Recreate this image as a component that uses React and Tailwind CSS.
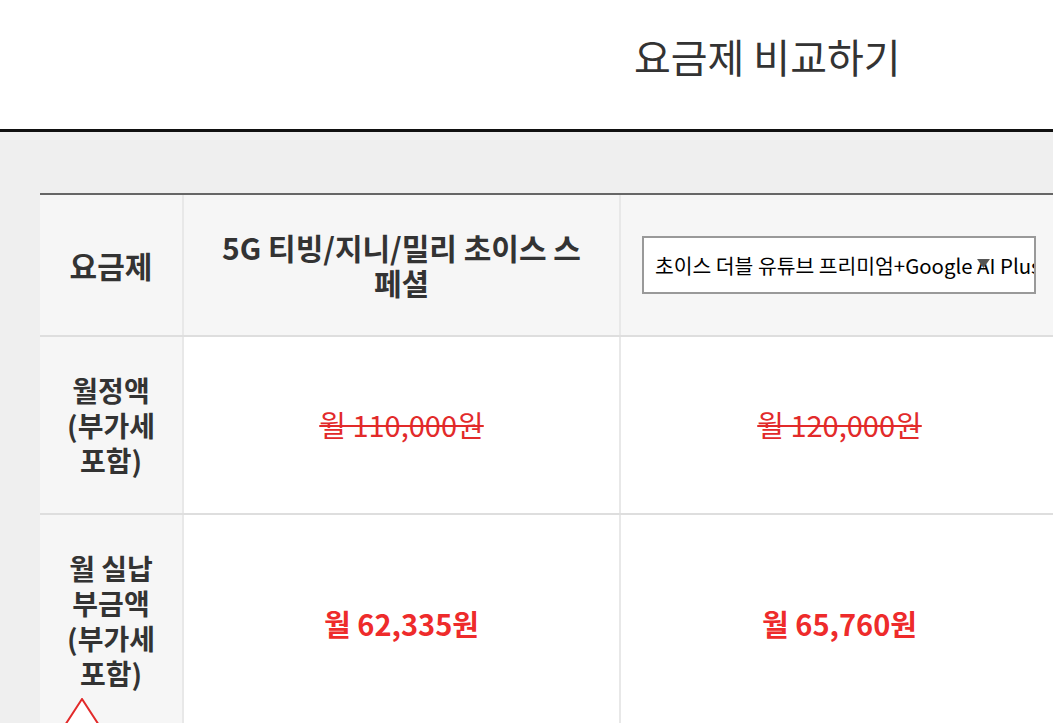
import React from 'react';

const font = { fontFamily: '"Noto Sans CJK KR", "Noto Sans", sans-serif' };

const App = () => {
  return (
    <div className="w-[1053px] h-[723px] overflow-hidden bg-[#efefef] text-[#333]" style={font}>
      {/* Header */}
      <header className="h-[132px] bg-white border-b-[3px] border-[#111] flex items-center pl-[634px] pb-[18px]">
        <h1 className="text-[40px] font-normal leading-none whitespace-nowrap">요금제 비교하기</h1>
      </header>

      {/* Compare table */}
      <div className="pt-[61px] pl-[40px]">
        <div className="w-[1018px] border-t-2 border-[#666]">
          {/* Header row */}
          <div className="grid grid-cols-[144px_437px_437px] h-[142px] border-b-2 border-[#dedede] bg-[#f6f6f6]">
            <div className="flex items-center justify-center border-r-2 border-[#e8e8e8] text-[30px] font-bold">요금제</div>
            <div className="flex items-center justify-center border-r-2 border-[#e8e8e8] px-[38px] text-center text-[30px] font-bold leading-[35px]">
              5G 티빙/지니/밀리 초이스 스페셜
            </div>
            <div className="flex items-center pl-[21px]">
              <div className="relative w-[394px] h-[58px] border-2 border-[#999] bg-white overflow-hidden flex items-center pl-[11px]">
                <span className="text-[20.4px] text-black whitespace-nowrap">초이스 더블 유튜브 프리미엄+Google AI Plus</span>
                <svg className="absolute right-[44px] top-[21px]" width="13" height="10" viewBox="0 0 13 10">
                  <polygon points="0,0 13,0 6.5,9" fill="#555" />
                </svg>
              </div>
            </div>
          </div>

          {/* Monthly fee */}
          <div className="grid grid-cols-[144px_437px_437px] h-[178px] border-b-2 border-[#dedede] bg-white">
            <div className="flex items-center justify-center border-r-2 border-[#e8e8e8] bg-[#f6f6f6] text-center text-[28px] font-bold leading-[35px] px-[18px]">
              월정액 (부가세 포함)
            </div>
            <div className="flex items-center justify-center border-r-2 border-[#e8e8e8] text-[29px] text-[#e22a2a] line-through decoration-2">
              월 110,000원
            </div>
            <div className="flex items-center justify-center text-[29px] text-[#e22a2a] line-through decoration-2">
              월 120,000원
            </div>
          </div>

          {/* Actual payment */}
          <div className="grid grid-cols-[144px_437px_437px] h-[214px] bg-white">
            <div className="flex flex-col items-center border-r-2 border-[#e8e8e8] bg-[#f6f6f6] pt-[36px]">
              <p className="text-center text-[28px] font-bold leading-[35px] w-[104px]">월 실납 부금액 (부가세 포함)</p>
              <svg className="self-start ml-[22px] mt-[7px]" width="40" height="34" viewBox="0 0 40 34">
                <polygon points="20,1 0.5,31 39.5,31" fill="#fff" stroke="#e22a2a" strokeWidth="2" />
              </svg>
            </div>
            <div className="flex items-center justify-center border-r-2 border-[#e8e8e8] text-[29px] font-bold text-[#ee2b2b]">
              월 62,335원
            </div>
            <div className="flex items-center justify-center text-[29px] font-bold text-[#ee2b2b]">
              월 65,760원
            </div>
          </div>
        </div>
      </div>
    </div>
  );
};

export default App;
